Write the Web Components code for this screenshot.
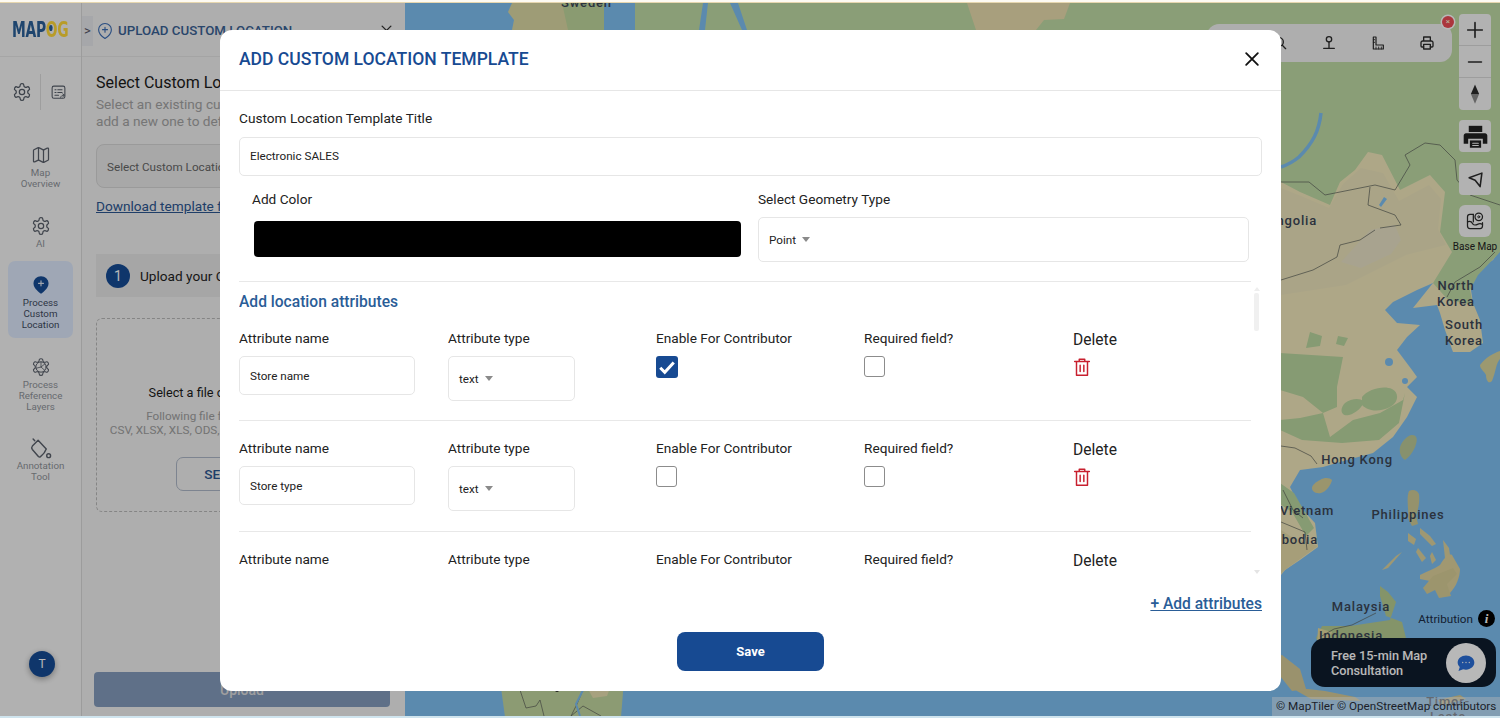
<!DOCTYPE html>
<html>
<head>
<meta charset="utf-8">
<title>MAPOG</title>
<style>
	html, body { margin: 0; height: 100%; overflow: hidden; background: #fff; font-family: Roboto, "Liberation Sans", sans-serif; }
	app-shell { height: 718px; }
</style>
</head>
<body>
<app-shell>
	<nav-rail slot="rail"></nav-rail>
	<upload-panel slot="panel"></upload-panel>
	<map-view slot="map"></map-view>
	<template-dialog slot="dialog"></template-dialog>
</app-shell>

<script>
const GEAR = 'M12.22 2h-.44a2 2 0 0 0-2 2v.18a2 2 0 0 1-1 1.73l-.43.25a2 2 0 0 1-2 0l-.15-.08a2 2 0 0 0-2.73.73l-.22.38a2 2 0 0 0 .73 2.73l.15.1a2 2 0 0 1 1 1.72v.51a2 2 0 0 1-1 1.74l-.15.09a2 2 0 0 0-.73 2.73l.22.38a2 2 0 0 0 2.73.73l.15-.08a2 2 0 0 1 2 0l.43.25a2 2 0 0 1 1 1.73V20a2 2 0 0 0 2 2h.44a2 2 0 0 0 2-2v-.18a2 2 0 0 1 1-1.73l.43-.25a2 2 0 0 1 2 0l.15.08a2 2 0 0 0 2.73-.73l.22-.39a2 2 0 0 0-.73-2.73l-.15-.08a2 2 0 0 1-1-1.74v-.5a2 2 0 0 1 1-1.74l.15-.09a2 2 0 0 0 .73-2.73l-.22-.38a2 2 0 0 0-2.73-.73l-.15.08a2 2 0 0 1-2 0l-.43-.25a2 2 0 0 1-1-1.73V4a2 2 0 0 0-2-2z';

function icon(size, body, extra) {
	return `<svg width="${size}" height="${size}" viewBox="0 0 24 24" fill="none" stroke="currentColor" stroke-width="1.5" stroke-linecap="round" stroke-linejoin="round" ${extra || ''}>${body}</svg>`;
}

const ICONS = {
	gear: `<path d="${GEAR}"/><circle cx="12" cy="12" r="3.2"/>`,
	report: '<rect x="3" y="3" width="18" height="17" rx="2.5"/><path d="M7 8h1.5M11 8h6M7 12h1.5M11 12h6M7 16h5"/><path d="M15 19c.5-2.2 2-3.2 4.5-3.2M18 14l2.5 1.8L18 18" stroke-width="1.3"/>',
	map: '<path d="M14.106 5.553a2 2 0 0 0 1.788 0l3.659-1.83A1 1 0 0 1 21 4.619v12.764a1 1 0 0 1-.553.894l-4.553 2.277a2 2 0 0 1-1.788 0l-4.212-2.106a2 2 0 0 0-1.788 0l-3.659 1.83A1 1 0 0 1 3 19.381V6.618a1 1 0 0 1 .553-.894l4.553-2.277a2 2 0 0 1 1.788 0z"/><path d="M15 5.764v15M9 3.236v15"/>',
	pinSolid: '<path d="M12 1.5c5 0 9 3.8 9 8.6 0 5.400-5.600 9.900-9 12.400-3.400-2.500-9-7-9-12.400 0-4.800 4-8.600 9-8.600z" fill="#164c95" stroke="none"/><path d="M12 7v6M9 10h6" stroke="#dfe6f0" stroke-width="1.4"/>',
	cog: `<path d="${GEAR}" stroke-width="1.3"/><circle cx="12" cy="12" r="6.200" stroke-width="1.2"/><path d="M12 5.800V12l4.500 4M12 12l-5.800 1.500M12 12l4.800-3.800" stroke-width="1"/>`,
	bucket: '<path d="M3.500 9.500 9.500 3.500 18 12.500c-1 3-3.500 6-6 8-.8.6-1.600.4-2.200-.2L3.500 13c-.8-1-.8-2.500 0-3.500z"/><path d="M6 3.800 4.300 2"/><circle cx="20.500" cy="19.500" r="2"/>',
	pinPlus: '<path d="M12 2c5 0 8.500 3.700 8.500 8.200 0 5-4.700 9.300-8.500 11.800-3.800-2.500-8.500-6.800-8.500-11.800C3.500 5.700 7 2 12 2z"/><path d="M12 7v6.500M8.700 10.200h6.600"/>',
	trash: '<path d="M4 6h16M9 6V3.500h6V6M6 6v15h12V6M10 10v7M14 10v7" stroke-width="1.600"/>',
	search: '<circle cx="10.500" cy="10.500" r="6.500" stroke-width="2"/><path d="m15.500 15.500 5 5" stroke-width="2"/>',
	stake: '<circle cx="12" cy="6.500" r="4" stroke-width="2"/><path d="M12 10.500V19M4 20h16" stroke-width="2"/>',
	ruler: '<path d="M5 3h4v12h11v6H5z" stroke-width="1.800"/><path d="M9 18v3M13 18v3M17 18v3M5 7h2M5 11h2" stroke-width="1.300"/>',
	printer: '<path d="M7 9V3h10v6M7 18H4.500A1.500 1.500 0 0 1 3 16.500v-5A2.500 2.500 0 0 1 5.500 9h13a2.500 2.500 0 0 1 2.500 2.500v5a1.500 1.500 0 0 1-1.500 1.500H17" stroke-width="2"/><path d="M7 14h10v7H7z" stroke-width="2"/>',
	printerSolid: '<path d="M6 2.500h12v5.500H6z" fill="#222" stroke="none"/><path d="M3.500 9h17c1.100 0 2 .9 2 2v7.500h-4V14H5.500v4.500h-4V11c0-1.100.9-2 2-2z" fill="#222" stroke="none"/><path d="M7 15.500h10V22H7z" fill="#222" stroke="none"/><path d="M9.500 18h5M9.500 20h5" stroke="#f7f7f7" stroke-width="1"/>',
	send: '<path d="M21 3 3 9.500l8.500 3.500 7 9z" stroke-width="2.200"/>',
	base: '<path d="M10 4H6a3 3 0 0 0-3 3v11a3 3 0 0 0 3 3h12a3 3 0 0 0 3-3v-4" stroke-width="1.500"/><path d="M3 13c3-1 5 0 6 2s4 2 6 1 4-1 6 0M10 4v9" stroke-width="1.500"/><circle cx="16.500" cy="7" r="4.500" stroke-width="1.500"/><circle cx="16.500" cy="7" r="1.200" stroke-width="1.200"/>',
	compass: '<path d="M12 1.500 16.500 12h-9z" fill="#2b2b2b" stroke="none"/><path d="M12 22.500 7.500 12h9z" fill="#8d8d8d" stroke="none"/>',
	close: '<path d="M5 5l14 14M19 5 5 19" stroke-width="2.200"/>',
	chat: '<path d="M12 3c5.500 0 10 3.800 10 8.500S17.500 20 12 20c-1.200 0-2.300-.2-3.400-.5L3 21.500l1.500-4.600C3 15.400 2 13.500 2 11.500 2 6.800 6.500 3 12 3z" fill="#2a6ed8" stroke="none"/><path d="M8 11.500h.01M12 11.500h.01M16 11.500h.01" stroke="#e8eef8" stroke-width="1.800"/>'
};

class AppShell extends HTMLElement {
	constructor() {
		super();
		let shadowRoot = this.attachShadow({mode: 'open'});
		shadowRoot.innerHTML = `
			<style>
				:host { display: flex; flex-direction: column; }
				.strip-top { height: 3px; background: linear-gradient(#fdfaf2 0 55%, #e6d6ae 55%); flex: none; }
				.strip-bottom { height: 2px; background: #cfe4ee; flex: none; }
				.app { position: relative; flex: 1; display: flex; min-height: 0; overflow: hidden; }
				.backdrop { position: absolute; inset: 0; background: rgba(0, 0, 0, .28); }
			</style>
			<div class="strip-top"></div>
			<div class="app">
				<slot name="rail"></slot>
				<slot name="panel"></slot>
				<slot name="map"></slot>
				<div class="backdrop"></div>
				<slot name="dialog"></slot>
			</div>
			<div class="strip-bottom"></div>
		`;
	}
}
customElements.define('app-shell', AppShell);

class NavItem extends HTMLElement {
	constructor() {
		super();
		let shadowRoot = this.attachShadow({mode: 'open'});
		shadowRoot.innerHTML = `
			<style>
				:host { display: flex; flex-direction: column; align-items: center; width: 65px; margin-left: 8px; padding: 14px 0 8px; border-radius: 7px; color: #5a606b; font-size: 9.750px; line-height: 11px; text-align: center; }
				:host([active]) { background: #dde8fb; color: #3d4a5e; }
				.icon { height: 20px; margin-bottom: 2px; display: flex; justify-content: center; align-items: center; }
				.text { color: #8e9399; }
				:host([active]) .text { color: #3d4a5e; }
			</style>
			<div class="icon">${icon(this.getAttribute('icon') === 'bucket' ? 23 : 20, ICONS[this.getAttribute('icon')])}</div>
			<div class="text"><slot></slot></div>
		`;
	}
}
customElements.define('nav-item', NavItem);

class NavRail extends HTMLElement {
	constructor() {
		super();
		let shadowRoot = this.attachShadow({mode: 'open'});
		shadowRoot.innerHTML = `
			<style>
				:host { display: flex; flex-direction: column; width: 81px; flex: none; background: #f6f6f6; border-right: 1px solid #d8d8d8; }
				.logo { height: 54px; box-sizing: border-box; border-bottom: 1px solid #e6e6e6; padding-left: 12px; display: flex; align-items: center; }
				.logo span { display: inline-block; transform: scaleX(.7); transform-origin: left center; margin-top: 1px; font: 700 22px/1 "DejaVu Sans Condensed", "Liberation Sans", sans-serif; color: #2a6099; letter-spacing: -.4px; white-space: nowrap; }
				.logo b { color: #ffd83a; font-weight: 700; }
				.logo .o { position: relative; }
				.logo .o::after { content: ""; position: absolute; left: 5px; top: 8px; width: 5px; height: 6px; border-radius: 50% 50% 50% 50% / 40% 40% 60% 60%; background: #2a6099; }
				.tools { height: 36px; margin-top: 17px; display: flex; align-items: center; color: #555d68; }
				.tools .a { margin-left: 12px; display: flex; }
				.tools .sep { width: 1px; height: 36px; background: #dcdcdc; margin: 0 9px 0 8px; }
				.tools .b { display: flex; }
				.items { margin-top: 21px; display: flex; flex-direction: column; gap: 4.5px; }
				.avatar { margin: auto 0 39px 29px; width: 26px; height: 26px; border-radius: 50%; background: #164c95; color: #fff; font-size: 12px; display: flex; align-items: center; justify-content: center; box-shadow: 0 2px 6px rgba(0, 0, 0, .35); }
			</style>
			<div class="logo"><span>MAP<b class="o">O</b><b>G</b></span></div>
			<div class="tools">
				<span class="a">${icon(20, ICONS.gear)}</span>
				<span class="sep"></span>
				<span class="b">${icon(17, ICONS.report)}</span>
			</div>
			<div class="items">
				<nav-item icon="map">Map<br>Overview</nav-item>
				<nav-item icon="gear">AI</nav-item>
				<nav-item icon="pinSolid" active>Process<br>Custom<br>Location</nav-item>
				<nav-item icon="cog">Process<br>Reference<br>Layers</nav-item>
				<nav-item icon="bucket">Annotation<br>Tool</nav-item>
			</div>
			<div class="avatar">T</div>
		`;
	}
}
customElements.define('nav-rail', NavRail);

class UploadPanel extends HTMLElement {
	constructor() {
		super();
		let shadowRoot = this.attachShadow({mode: 'open'});
		shadowRoot.innerHTML = `
			<style>
				:host { display: flex; flex-direction: column; width: 323px; flex: none; box-sizing: border-box; background: #f1f1f1; position: relative; }
				.head { height: 54px; flex: none; box-sizing: border-box; padding-top: 2px; border-bottom: 1px solid #e3e3e3; display: flex; align-items: center; }
				.tab { width: 11px; height: 30px; background: #e6e8ec; color: #556; font-size: 13px; display: flex; align-items: center; justify-content: center; }
				.pin { color: #3a6cb4; display: flex; margin: 0 4px 0 3px; }
				h2 { margin: 0; font-size: 13.300px; font-weight: 500; color: #3a6295; white-space: nowrap; flex: 1; }
				.x { margin: 0 11px 0 0; color: #333; display: flex; }
				.body { padding-left: 14px; padding-right: 15px; display: flex; flex-direction: column; flex: 1; }
				.title { margin-top: 16px; font-size: 16px; line-height: 20px; color: #1b1b1b; white-space: nowrap; }
				.sub { margin-top: 2.500px; font-size: 13.650px; line-height: 17px; color: #a4a4a4; white-space: nowrap; }
				.select { margin-top: 14.500px; height: 44px; box-sizing: border-box; padding: 2px 0 0 10px; background: #e9e9e9; border: 1px solid #d6d6d6; border-radius: 8px; display: flex; align-items: center; font-size: 11.700px; color: #666; white-space: nowrap; }
				a { margin-top: 9px; font-size: 13.650px; line-height: 18px; color: #2c5691; text-decoration: underline; white-space: nowrap; }
				.step { margin-top: 39px; height: 43px; background: #e6e6e6; display: flex; align-items: center; gap: 10px; padding-left: 10px; font-size: 13.650px; color: #1f1f1f; white-space: nowrap; }
				.num { width: 24px; height: 24px; border-radius: 50%; background: #164c95; color: #fff; display: flex; align-items: center; justify-content: center; font-size: 14px; }
				.drop { margin-top: 21px; height: 194px; box-sizing: border-box; border: 1px dashed #b9b9b9; border-radius: 6px; display: flex; flex-direction: column; align-items: center; padding-top: 66px; }
				.drop .main { font-size: 12.700px; line-height: 16px; color: #1b1b1b; white-space: nowrap; }
				.drop .hint { margin-top: 8px; font-size: 11.700px; line-height: 14px; color: #a0a0a0; text-align: center; white-space: nowrap; }
				.drop .btn { margin-top: 20px; width: 134px; height: 34px; box-sizing: border-box; border: 1px solid #aeb8c8; border-radius: 7px; display: flex; align-items: center; justify-content: center; font-size: 13.650px; font-weight: 500; color: #2c5691; }
				.upload { margin: auto 0 9px -2px; width: 296px; height: 35px; background: #849cbd; border-radius: 4px; display: flex; align-items: center; justify-content: center; color: #ddd; font-size: 14px; font-weight: 500; }
			</style>
			<div class="head">
				<span class="tab">&gt;</span>
				<span class="pin">${icon(18, ICONS.pinPlus)}</span>
				<h2>UPLOAD CUSTOM LOCATION</h2>
				<span class="x">${icon(15, ICONS.close)}</span>
			</div>
			<div class="body">
				<div class="title">Select Custom Location Template</div>
				<div class="sub">Select an existing custom location template or<br>add a new one to define attributes</div>
				<div class="select">Select Custom Location Template</div>
				<a>Download template file</a>
				<div class="step"><span class="num">1</span>Upload your CSV file</div>
				<div class="drop">
					<div class="main">Select a file or drag and drop here</div>
					<div class="hint">Following file formats are supported :<br>CSV, XLSX, XLS, ODS, TSV, GeoJSON, KML, GeoTIFF</div>
					<div class="btn">SELECT FILE</div>
				</div>
				<div class="upload">Upload</div>
			</div>
		`;
	}
}
customElements.define('upload-panel', UploadPanel);

class MapView extends HTMLElement {
	constructor() {
		super();
		let shadowRoot = this.attachShadow({mode: 'open'});
		shadowRoot.innerHTML = `
			<style>
				:host { display: block; flex: 1; position: relative; overflow: hidden; background: #7ec0f2; }
				svg.base { position: absolute; inset: 0; width: 100%; height: 100%; display: block; }
				svg.base text { font: 500 13px Roboto, sans-serif; letter-spacing: .8px; fill: #3c4656; }
				.bar { position: absolute; left: 802px; top: 21px; width: 245px; height: 38px; box-sizing: border-box; padding-left: 65px; border-radius: 12px; background: #f2f2f2; display: flex; align-items: center; gap: 33px; color: #2b2b2b; }
				.bar span { display: flex; }
				.badge { position: absolute; left: 1037px; top: 13px; width: 12px; height: 12px; border-radius: 50%; background: #ee4b55; box-shadow: 0 0 0 1.500px #fff; color: #ffd; display: flex; align-items: center; justify-content: center; font-size: 8px; line-height: 1; }
				.controls { position: absolute; right: 9px; top: 11px; width: 32px; display: flex; flex-direction: column; align-items: center; color: #2b2b2b; }
				.box { width: 32px; height: 32px; background: #f7f7f7; border-radius: 4px; display: flex; align-items: center; justify-content: center; }
				.zoom { border-radius: 4px; overflow: hidden; margin-bottom: 10px; }
				.zoom .box { border-radius: 0; border-bottom: 1px solid #dadada; box-sizing: border-box; }
				.zoom .box:last-child { border-bottom: 0; }
				.label { font-size: 10px; line-height: 12px; color: #222; margin-top: 4px; white-space: nowrap; }
				.attr { position: absolute; right: 5px; top: 607px; display: flex; align-items: center; gap: 5px; font-size: 11.700px; color: #1c2c44; }
				.attr i { width: 17px; height: 17px; border-radius: 50%; background: #000; color: #fff; font: italic 700 13px "Liberation Serif", serif; display: flex; align-items: center; justify-content: center; }
				.chip { position: absolute; left: 906px; top: 635px; width: 185px; height: 49px; box-sizing: border-box; padding-left: 20px; background: #0f1c2d; border-radius: 14px; display: flex; align-items: center; justify-content: space-between; color: #fff; font-size: 12.700px; font-weight: 500; line-height: 15px; }
				.chip .bubble { width: 40px; height: 40px; margin-right: 10px; border-radius: 50%; background: #fff; display: flex; align-items: center; justify-content: center; }
				.copy { position: absolute; right: 0; top: 694px; width: 228px; height: 19px; box-sizing: border-box; padding-left: 4px; background: rgba(255, 255, 255, .42); font-size: 11.700px; line-height: 19px; color: #2a2f3a; white-space: nowrap; }
			</style>
			<svg class="base" viewBox="405 3 1095 713" preserveAspectRatio="none">
				<defs><filter id="soft" x="-5%" y="-5%" width="110%" height="110%"><feGaussianBlur stdDeviation=".7"/></filter></defs>
				<rect x="405" y="3" width="1095" height="713" fill="#7ec0f2"/>
				<g filter="url(#soft)">
				<!-- Scandinavia -->
				<path d="M512 3l-4 9 6 8-2 10 90 0 0-27z" fill="#dcd9a4"/>
				<path d="M562 3h42v27h-36z" fill="#bfd79d"/>
				<!-- Africa, seen below the dialog -->
				<path d="M500 680h124l-3 37H505z" fill="#c3d7a0"/>
				<path d="M583 680h30l-6 16-14 2z" fill="#e8dfb0"/>
				<!-- Asia -->
				<path d="M635 3H1500V250L1493 260 1477 270 1470 284 1473 303 1480 320 1483 343 1470 352 1453 352 1445 330 1440 313 1437 305 1413 308 1433 283 1417 290 1393 302 1385 310 1397 323 1420 325 1407 337 1397 350 1412 370 1417 377 1407 387 1417 397 1407 417 1393 437 1373 453 1347 460 1323 467 1300 470 1290 487 1300 507 1315 523 1318 547 1300 560 1285 570 1281 575H635z" fill="#f2e8bc"/>
				<path d="M635 3H1500V252L1478 275 1470 290 1473 305 1448 300 1433 283 1452 252 1440 232 1445 192 1430 175 1400 190 1382 155 1368 152 1355 170 1340 182 1330 205 1300 192 1281 182 1100 200H635z" fill="#c0dba6"/>
				<path d="M967 3h103l-6 16-20 1-8 10h-60z" fill="#e9ddad"/>
				<path d="M1281 188l20 8 28 12 14-24 18-16 22 5 16 28 30-16 12 14-3 30 8 16-40 10-60 30-65 10z" fill="#ece4bc"/>
				<path d="M1370 230l25 -5 6 15-10 14-30 14-20-6z" fill="#e9e2c6"/>
				<path d="M1280 353l63 4-6 30v20l-14 6-20-16-23-7zM1280 420l20-2 23-5 7 24 23-17 27-7 23-13 2-7-6 30-20 17-37 3-40-3-22-10zM1362 397c6-8 22-12 30-8s6 14-2 18-20 6-28-2zM1345 403c6-5 16-5 18-2s-6 12-14 14-10-6-4-12zM1310 332l12 4-2 10-14 2zM1338 336l10 2-4 8-8-2zM1280 483l14 10 20 35-8 8-14-24-12-8z" fill="#bad7a0"/>
				<path d="M1281 530l12 8 25 8-18 13-15 11-4 4z" fill="#e7dba8"/>
				<!-- Lakes -->
				<path d="M1321 113c-2 18-8 30-22 44-6 5-12 8-18 10" fill="none" stroke="#7ec0f2" stroke-width="3.500"/>
				<path d="M1384 197l-5 8 2 2 6-8z" fill="#7ec0f2"/>
				<path d="M703 3l-4 27h6l3-27zM730 3l12 27h5l-9-27z" fill="#7ec0f2"/>
				<circle cx="1389" cy="362" r="4" fill="#7ec0f2"/>
				<circle cx="1405" cy="381" r="3" fill="#7ec0f2"/>
				<!-- Islands -->
				<path d="M1480 365c6-8 14-12 20-14v8c-4 4-4 12-8 22-4 4-6-2-6-6-2-4-6-6-6-10z" fill="#d8d49c"/>
				<path d="M1412 435c4 0 6 3 4 9-2 8-8 14-11 16-4-2-6-8-5-13 2-6 8-12 12-12z" fill="#bcc998"/>
				<path d="M1320 480c5-3 10-2 12 0-1 5-6 12-11 13-6 1-9-2-9-5s4-6 8-8z" fill="#d6cf98"/>
				<path d="M1409 491c4-2 8-1 10 3 1 8-1 16-3 22l2 8-6 2-4-8c1-8-2-20 1-27z" fill="#cfcb96"/>
				<path d="M1408 533l8 6-2 6-6-4zM1420 528l10 8 6 8-4 2-12-12zM1418 548l8 10-4 4-6-10zM1432 552l4 8-4 4-2-8zM1443 540l6 8 2 14-6-4z" fill="#ddd39f"/>
				<path d="M1420 575c8-4 14-6 20-10 4-6 8-12 12-10l8 14c0 8-4 18-10 24-4 0-4-6-10-8-4 0-8-4-10-4l-10-2z" fill="#e0d39d"/>
				<path d="M1382 570l14-14 6-4-14 16z" fill="#ddd39f"/>
				<path d="M1380 586l8 6 8 10-6 18-40 6-28 0-6 12 14 25h70l6-25-4-16-16-6-6-20z" fill="#b7cd92"/>
				<path d="M1318 628l14 4-6 20 20 14-30 0z" fill="#e5da9f"/>
				<path d="M1423 588l10-12 20-8 4 6-10 10 4 12-12 2-4-8-8 4z" fill="#d9cf98"/>
				<path d="M1282 655l18 14 6 20-14 2-16-20-2-14zM1290 687l35 4 30 6 6 4-50-2zM1400 677l40-6 8 4-42 8z" fill="#d6cb97"/>
				<path d="M1438 700l22-5 6 4-24 6z" fill="#d6cb97"/>
				</g>
				<!-- Borders -->
				<g fill="none" stroke="#5a5f58" stroke-width=".7">
					<path d="M1281 182l28 0 16 13 25-5 25-5 20 5 15-25-5-10 20-12 15 2 15 15 2 20 13 15 30 10"/>
					<path d="M1370 187l-2 18 27 10 6 10-21 3"/>
					<path d="M1375 230l-15 10-20 5-3 12-24 13-32 10"/>
					<path d="M1495 252l-15 15-25 15-8 15"/>
					<path d="M1281 446l14 2 16 8 6 8"/>
					<path d="M1283 490l10 20 10 8M1281 522l24 10 2 18"/>
					<path d="M1320 637l14-8 18-4 24-12"/>
					<path d="M520 690l6 18 10-2 4-6 4 16M583 690l-6 14-6 12 12-10 18 10"/>
				</g>
				<path d="M583 690l-7 14 4 12" fill="none" stroke="#7ec0f2" stroke-width="2"/>
				<circle cx="557" cy="690" r="2" fill="#222"/>
				<!-- Labels -->
				<text x="561" y="7">Sweden</text>
				<text x="1317" y="225" text-anchor="end">ngolia</text>
				<text x="1456" y="290" text-anchor="middle">North</text>
				<text x="1456" y="306" text-anchor="middle">Korea</text>
				<text x="1464" y="329" text-anchor="middle">South</text>
				<text x="1464" y="345" text-anchor="middle">Korea</text>
				<text x="1357" y="464" text-anchor="middle">Hong Kong</text>
				<text x="1307" y="515" text-anchor="middle">Vietnam</text>
				<text x="1318" y="544" text-anchor="end">bodia</text>
				<text x="1408" y="519" text-anchor="middle">Philippines</text>
				<text x="1361" y="611" text-anchor="middle">Malaysia</text>
				<text x="1351" y="640" text-anchor="middle">Indonesia</text>
				<text x="1448" y="706" text-anchor="middle">Timor-</text>
				<text x="1448" y="721" text-anchor="middle">Leste</text>
				<text x="600" y="690" text-anchor="middle">Tanzania</text>
			</svg>
			<div class="bar">
				<span>${icon(16, ICONS.search)}</span>
				<span>${icon(16, ICONS.stake)}</span>
				<span>${icon(16, ICONS.ruler)}</span>
				<span>${icon(16, ICONS.printer)}</span>
			</div>
			<div class="badge">×</div>
			<div class="controls">
				<div class="zoom">
					<div class="box">${icon(22, '<path d="M12 4v16M4 12h16" stroke-width="1.800"/>')}</div>
					<div class="box">${icon(22, '<path d="M5 12h14" stroke-width="1.800"/>')}</div>
					<div class="box">${icon(22, ICONS.compass)}</div>
				</div>
				<div class="box" style="margin-bottom: 11px">${icon(27, ICONS.printerSolid)}</div>
				<div class="box" style="margin-bottom: 10px">${icon(17, ICONS.send)}</div>
				<div class="box" style="border-radius: 6px">${icon(20, ICONS.base)}</div>
				<div class="label">Base Map</div>
			</div>
			<div class="attr">Attribution <i>i</i></div>
			<div class="chip">
				<span>Free 15-min Map<br>Consultation</span>
				<span class="bubble">${icon(20, ICONS.chat)}</span>
			</div>
			<div class="copy">© MapTiler © OpenStreetMap contributors</div>
		`;
	}
}
customElements.define('map-view', MapView);

class FormField extends HTMLElement {
	constructor() {
		super();
		let shadowRoot = this.attachShadow({mode: 'open'});
		shadowRoot.innerHTML = `
			<style>
				:host { display: flex; align-items: center; box-sizing: border-box; height: 39px; padding-left: 10px; background: #fff; border: 1px solid #e6e6e6; border-radius: 5px; font-size: 11.700px; color: #222; }
				:host([select]) { height: 45px; }
				.caret { width: 0; height: 0; margin-left: 6px; border-left: 4.500px solid transparent; border-right: 4.500px solid transparent; border-top: 5px solid #8a8a8a; }
			</style>
			<slot></slot>${this.hasAttribute('select') ? '<span class="caret"></span>' : ''}
		`;
	}
}
customElements.define('form-field', FormField);

class AttributeRow extends HTMLElement {
	constructor() {
		super();
		let shadowRoot = this.attachShadow({mode: 'open'});
		let enable = this.hasAttribute('enabled');
		let labelsOnly = this.hasAttribute('clipped');
		shadowRoot.innerHTML = `
			<style>
				:host { display: grid; grid-template-columns: 209px 208px 208px 209px 178px; box-sizing: border-box; height: 110.400px; padding-top: 19px; border-bottom: 1px solid #e8e8e8; font-size: 13.650px; color: #222; flex: none; }
				:host(:last-child) { border-bottom: 0; }
				.label { line-height: 17px; height: 18px; margin-bottom: 8px; white-space: nowrap; }
				.del { font-size: 15.600px; line-height: 21px; height: 18px; }
				form-field.name { width: 176px; }
				form-field.type { width: 127px; }
				.box { width: 21px; height: 21px; box-sizing: border-box; border: 1.500px solid #8c8c8c; border-radius: 3px; margin-top: 1px; }
				.box.on { width: 22px; height: 22px; margin-top: 0; border: 0; background: #174a92; display: flex; align-items: center; justify-content: center; }
				.trash { display: flex; margin: 1px 0 0 -1.700px; color: #c8202f; }
			</style>
			<div><div class="label">Attribute name</div>${labelsOnly ? '' : `<form-field class="name">${this.getAttribute('name') || ''}</form-field>`}</div>
			<div><div class="label">Attribute type</div>${labelsOnly ? '' : '<form-field class="type" select>text</form-field>'}</div>
			<div><div class="label">Enable For Contributor</div>${labelsOnly ? '' : `<div class="box ${enable ? 'on' : ''}">${enable ? '<svg width="18" height="18" viewBox="0 0 24 24" fill="none" stroke="#fff" stroke-width="4"><path d="M3 13l6 6L21 6"/></svg>' : ''}</div>`}</div>
			<div><div class="label">Required field?</div>${labelsOnly ? '' : '<div class="box"></div>'}</div>
			<div><div class="label del">Delete</div>${labelsOnly ? '' : `<div class="trash">${icon(22, ICONS.trash)}</div>`}</div>
		`;
	}
}
customElements.define('attribute-row', AttributeRow);

class TemplateDialog extends HTMLElement {
	constructor() {
		super();
		let shadowRoot = this.attachShadow({mode: 'open'});
		shadowRoot.innerHTML = `
			<style>
				:host { position: absolute; left: 220px; top: 27px; width: 1061px; height: 661px; display: flex; flex-direction: column; background: #fff; border-radius: 12px; color: #222; font-size: 13.650px; }
				header { height: 61px; box-sizing: border-box; flex: none; padding: 0 19px 2px; border-bottom: 1px solid #e6e6e6; display: flex; align-items: center; justify-content: space-between; }
				h1 { margin: 0; font-size: 17.550px; font-weight: 500; color: #174a92; }
				header span { display: flex; color: #111; }
				.body { padding: 18px 19px 0; display: flex; flex-direction: column; flex: 1; min-height: 0; }
				.label { line-height: 18px; height: 18px; white-space: nowrap; }
				.title-input { margin-top: 10px; padding-bottom: 2px; }
				.split { margin-top: 14px; display: flex; gap: 17px; padding-bottom: 19px; border-bottom: 1px solid #e8e8e8; margin-right: 11px; }
				.col-color { width: 489px; padding-left: 13px; box-sizing: content-box; margin-right: -13px; }
				.col-geo { width: 491px; margin-left: 13px; }
				.swatch { margin: 13px 0 0 2px; width: 487px; height: 36px; background: #000; border-radius: 4px; }
				.col-geo form-field { margin-top: 9px; }
				.scroll { height: 293px; flex: none; display: flex; overflow: hidden; }
				.rows { width: 1012px; flex: none; overflow: hidden; display: flex; flex-direction: column; }
				h3 { margin: 10px 0 -1px; font-size: 15.600px; font-weight: 500; line-height: 20px; color: #2a5d97; flex: none; }
				.track { flex: 1; display: flex; flex-direction: column; align-items: center; padding-top: 5px; box-sizing: border-box; }
				.arrow { width: 0; height: 0; border-left: 3px solid transparent; border-right: 3px solid transparent; border-bottom: 4px solid #eee; }
				.arrow.down { margin-top: auto; margin-bottom: 1px; border-bottom: 0; border-top: 4px solid #e4e4e4; }
				.thumb { margin-top: 2px; width: 5px; height: 38px; background: #f0f0f0; border-radius: 2px; }
				.add { margin-top: 19px; text-align: right; font-size: 15.600px; font-weight: 500; line-height: 20px; color: #2a5d97; text-decoration: underline; }
				.save { margin: 18px auto 0; width: 147px; height: 39px; background: #174a92; border-radius: 8px; display: flex; align-items: center; justify-content: center; color: #fff; font-size: 13px; font-weight: 700; }
			</style>
			<header>
				<h1>ADD CUSTOM LOCATION TEMPLATE</h1>
				<span>${icon(20, ICONS.close)}</span>
			</header>
			<div class="body">
				<div class="label">Custom Location Template Title</div>
				<form-field class="title-input">Electronic SALES</form-field>
				<div class="split">
					<div class="col-color">
						<div class="label">Add Color</div>
						<div class="swatch"></div>
					</div>
					<div class="col-geo">
						<div class="label">Select Geometry Type</div>
						<form-field select>Point</form-field>
					</div>
				</div>
				<div class="scroll">
					<div class="rows">
						<h3>Add location attributes</h3>
						<attribute-row name="Store name" enabled></attribute-row>
						<attribute-row name="Store type"></attribute-row>
						<attribute-row clipped></attribute-row>
					</div>
					<div class="track">
						<span class="arrow"></span>
						<span class="thumb"></span>
						<span class="arrow down"></span>
					</div>
				</div>
				<div class="add">+ Add attributes</div>
				<div class="save">Save</div>
			</div>
		`;
	}
}
customElements.define('template-dialog', TemplateDialog);
</script>
</body>
</html>
